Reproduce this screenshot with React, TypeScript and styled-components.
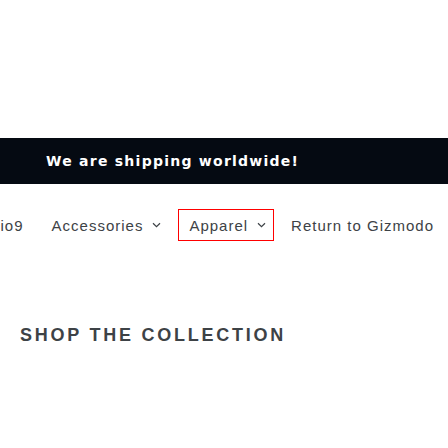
import React from "react";
import styled, { createGlobalStyle } from "styled-components";

const Global = createGlobalStyle`
  html, body { margin: 0; padding: 0; background: #fff; }
  body { font-family: "Liberation Sans", Arial, sans-serif; }
`;

const Page = styled.div`
  width: 448px;
  height: 448px;
  overflow: hidden;
  display: flex;
  flex-direction: column;
  background: #fff;
`;

const TopSpace = styled.div`
  height: 138px;
`;

const Banner = styled.div`
  height: 46px;
  background: #050a12;
  display: flex;
  align-items: center;
  padding-left: 46px;
`;

const BannerText = styled.span`
  color: #fff;
  font-family: "DejaVu Sans", "Liberation Sans", sans-serif;
  font-weight: 700;
  font-size: 14px;
  letter-spacing: 1.25px;
`;

const Nav = styled.nav`
  display: flex;
  justify-content: flex-end;
  align-items: center;
  height: 32px;
  margin-top: 25px;
  overflow: hidden;
  white-space: nowrap;
`;

const NavItem = styled.a`
  flex: none;
  display: flex;
  align-items: center;
  gap: 9px;
  height: 32px;
  box-sizing: border-box;
  padding: 0 14px;
  color: #3d4246;
  font-family: "Liberation Sans", Arial, sans-serif;
  font-size: 15px;
  letter-spacing: 1px;
  text-decoration: none;
`;

const ActiveItem = styled(NavItem)`
  padding: 0 7px 0 10px;
  margin: 0 3px;
  border: 1px solid #ff0000;
`;

const Chevron = () => (
  <svg width="9" height="6" viewBox="0 0 9 6" fill="none">
    <path d="M1 1.2 L4.5 4.6 L8 1.2" stroke="#3d4246" strokeWidth="1.2" />
  </svg>
);

const Heading = styled.h2`
  margin: 84px 0 0 20px;
  color: #3d4246;
  font-family: "Liberation Sans", Arial, sans-serif;
  font-weight: 700;
  font-size: 18px;
  letter-spacing: 2.75px;
  text-transform: uppercase;
`;

export default function App() {
  return (
    <Page>
      <Global />
      <TopSpace />
      <Banner>
        <BannerText>We are shipping worldwide!</BannerText>
      </Banner>
      <Nav>
        <NavItem>Kotaku</NavItem>
        <NavItem>io9</NavItem>
        <NavItem>
          Accessories <Chevron />
        </NavItem>
        <ActiveItem>
          Apparel <Chevron />
        </ActiveItem>
        <NavItem>Return to Gizmodo</NavItem>
      </Nav>
      <Heading>Shop the collection</Heading>
    </Page>
  );
}
